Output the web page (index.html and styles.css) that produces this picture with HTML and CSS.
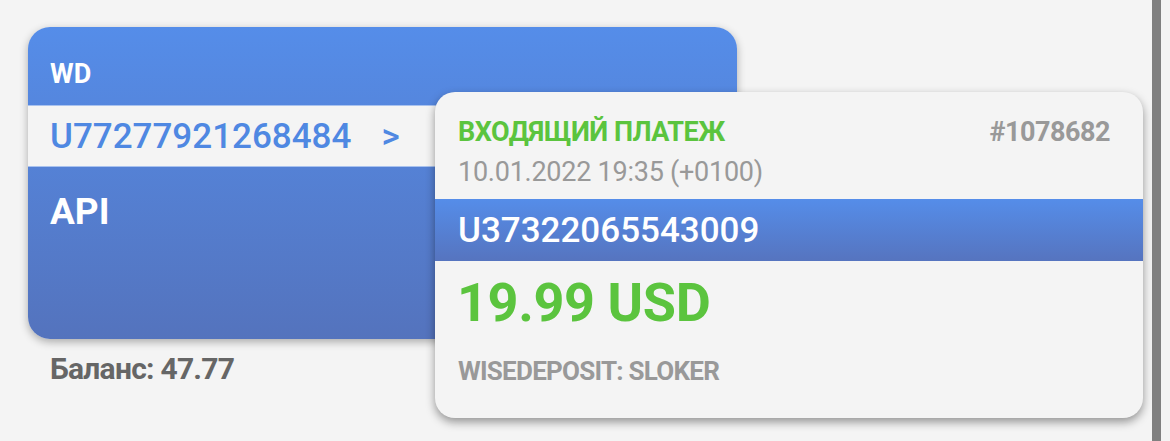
FILE: index.html
```html
<html>
  <head>
    <title>Wallet</title>
    <link rel="stylesheet" href="styles.css">
  </head>
  <body>
    <div class="main">
      <div class="wallet">
        <div class="wallet-head">WD</div>
        <div class="wallet-account">
          <span>U77277921268484</span><span class="arrow">&gt;</span>
        </div>
        <div class="wallet-name">API</div>
      </div>
      <div class="balance">Баланс: 47.77</div>

      <div class="payment">
        <div class="payment-top">
          <span class="payment-type">ВХОДЯЩИЙ ПЛАТЕЖ</span>
          <span class="payment-id">#1078682</span>
        </div>
        <div class="payment-date">10.01.2022 19:35 (+0100)</div>
        <div class="payment-from">U37322065543009</div>
        <div class="payment-amount">19.99 USD</div>
        <div class="payment-memo">WISEDEPOSIT: SLOKER</div>
      </div>
    </div>
    <div class="divider"></div>
  </body>
</html>
```

FILE: styles.css
```css
body {
  margin: 0;
  height: 441px;
  display: flex;
  background: #f4f4f4;
  font-family: Roboto, "Noto Sans", sans-serif;
  overflow: hidden;
}

.main {
  position: relative;
  flex: 0 0 1152px;
  padding: 27px 0 0 28px;
  box-sizing: border-box;
}

.divider {
  flex: 0 0 9px;
  background: #808080;
}

/* wallet card */
.wallet {
  width: 709px;
  height: 312px;
  border-radius: 22px;
  overflow: hidden;
  background: linear-gradient(#558de9, #5473bd);
  box-shadow: 0 3px 8px rgba(0, 0, 0, 0.3);
  color: #fff;
}

.wallet-head {
  height: 78px;
  box-sizing: border-box;
  padding: 34px 0 0 22px;
  font-size: 27px;
  line-height: 27px;
  font-weight: 700;
}

.wallet-account {
  height: 62px;
  display: flex;
  align-items: center;
  padding-left: 22px;
  background: #f4f4f4;
  border-top: 1px solid #a9c2ee;
  border-bottom: 1px solid #a9c2ee;
  box-sizing: border-box;
  color: #4f88e2;
  font-size: 35px;
  line-height: 35px;
  font-weight: 500;
}

.arrow {
  margin-left: 30px;
}

.wallet-name {
  margin: 26px 0 0 22px;
  font-size: 37px;
  line-height: 37px;
  font-weight: 700;
}

.balance {
  margin: 15px 0 0 22px;
  font-size: 30px;
  line-height: 30px;
  font-weight: 700;
  letter-spacing: -0.75px;
  color: #666;
}

/* payment popup */
.payment {
  position: absolute;
  left: 435px;
  top: 92px;
  width: 708px;
  height: 326px;
  border-radius: 20px;
  overflow: hidden;
  background: #f4f4f4;
  box-shadow: 0 4px 10px rgba(0, 0, 0, 0.4);
  padding-top: 26px;
  box-sizing: border-box;
}

.payment-top {
  display: flex;
  justify-content: space-between;
  padding: 0 33px 0 23px;
  font-size: 27px;
  line-height: 28px;
  font-weight: 700;
  letter-spacing: -0.5px;
}

.payment-type {
  color: #5bc43e;
}

.payment-id {
  color: #999;
}

.payment-date {
  margin-top: 12px;
  padding-left: 23px;
  font-size: 27px;
  line-height: 28px;
  letter-spacing: -0.25px;
  color: #999;
}

.payment-from {
  margin-top: 13px;
  height: 62px;
  display: flex;
  align-items: center;
  padding-left: 23px;
  background: linear-gradient(#558de9, #5674bf);
  color: #fff;
  font-size: 35px;
  line-height: 35px;
  font-weight: 500;
}

.payment-amount {
  margin-top: 15px;
  padding-left: 22px;
  font-size: 54px;
  line-height: 54px;
  font-weight: 700;
  letter-spacing: -0.4px;
  color: #5bc43e;
}

.payment-memo {
  margin-top: 28px;
  padding-left: 23px;
  font-size: 26px;
  line-height: 26px;
  font-weight: 700;
  letter-spacing: -0.75px;
  color: #999;
}
```
